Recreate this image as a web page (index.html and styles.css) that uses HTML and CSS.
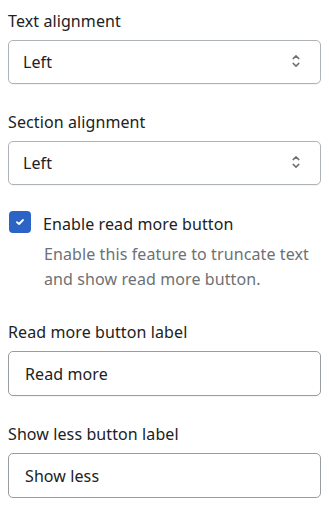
FILE: index.html
```html
<!DOCTYPE html>
<html lang="en">
<head>
<meta charset="utf-8">
<link rel="stylesheet" href="styles.css">
</head>
<body>
<form class="settings">
  <div class="field">
    <label class="label">Text alignment</label>
    <div class="select">
      <span class="select-value">Left</span>
      <svg class="chev" width="8" height="14" viewBox="0 0 8 14" aria-hidden="true">
        <path d="M1.2 3.6 L4 0.9 L6.8 3.6 M1.2 8.4 L4 11.1 L6.8 8.4" fill="none" stroke="#6d7175" stroke-width="1.5" stroke-linecap="round" stroke-linejoin="round"/>
      </svg>
    </div>
  </div>
  <div class="field">
    <label class="label">Section alignment</label>
    <div class="select">
      <span class="select-value">Left</span>
      <svg class="chev" width="8" height="14" viewBox="0 0 8 14" aria-hidden="true">
        <path d="M1.2 3.6 L4 0.9 L6.8 3.6 M1.2 8.4 L4 11.1 L6.8 8.4" fill="none" stroke="#6d7175" stroke-width="1.5" stroke-linecap="round" stroke-linejoin="round"/>
      </svg>
    </div>
  </div>
  <div class="field check-field">
    <div class="check-row">
      <span class="checkbox">
        <svg width="12" height="12" viewBox="0 0 12 12" aria-hidden="true">
          <path d="M3 6.2 L5.1 8 L9 4" fill="none" stroke="#fff" stroke-width="1.8" stroke-linecap="round" stroke-linejoin="round"/>
        </svg>
      </span>
      <span class="check-label">Enable read more button</span>
    </div>
    <p class="help">Enable this feature to truncate text and show read more button.</p>
  </div>
  <div class="field">
    <label class="label">Read more button label</label>
    <div class="input">Read more</div>
  </div>
  <div class="field">
    <label class="label">Show less button label</label>
    <div class="input">Show less</div>
  </div>
</form>
</body>
</html>
```

FILE: styles.css
```css
* { box-sizing: border-box; }
html, body { margin: 0; padding: 0; background: #ffffff; }
body {
  font-family: "Noto Sans", "Open Sans", sans-serif;
  font-size: 16px;
  letter-spacing: 0.1px;
  color: #202223;
}
.settings {
  display: flex;
  flex-direction: column;
  padding: 9px 8px 0 8px;
  gap: 26px;
}
.field {
  display: flex;
  flex-direction: column;
  gap: 7px;
}
.label {
  line-height: 24px;
  height: 24px;
}
.select, .input {
  height: 44px;
  border: 1px solid #aeb3b8;
  border-radius: 5px;
  display: flex;
  align-items: center;
  background: #fff;
  box-shadow: 0 1px 0 rgba(0,0,0,0.04);
}
.select {
  padding: 0 20px 0 14px;
  justify-content: space-between;
}
.input {
  padding: 0 16px;
  border-color: #989da2;
  height: 45px;
}
.chev { display: block; }
.check-field { gap: 6px; margin-top: 1px; margin-bottom: 2px; }
.check-row {
  display: flex;
  align-items: flex-start;
  gap: 12px;
  height: 24px;
}
.checkbox {
  width: 22px;
  height: 22px;
  margin: -1px 0 0 1px;
  border-radius: 4px;
  background: #2c64c5;
  display: flex;
  align-items: center;
  justify-content: center;
}
.check-label { line-height: 24px; }
.help {
  margin: 0;
  padding-left: 36px;
  padding-right: 4px;
  color: #6d7175;
  line-height: 25px;
}
```
